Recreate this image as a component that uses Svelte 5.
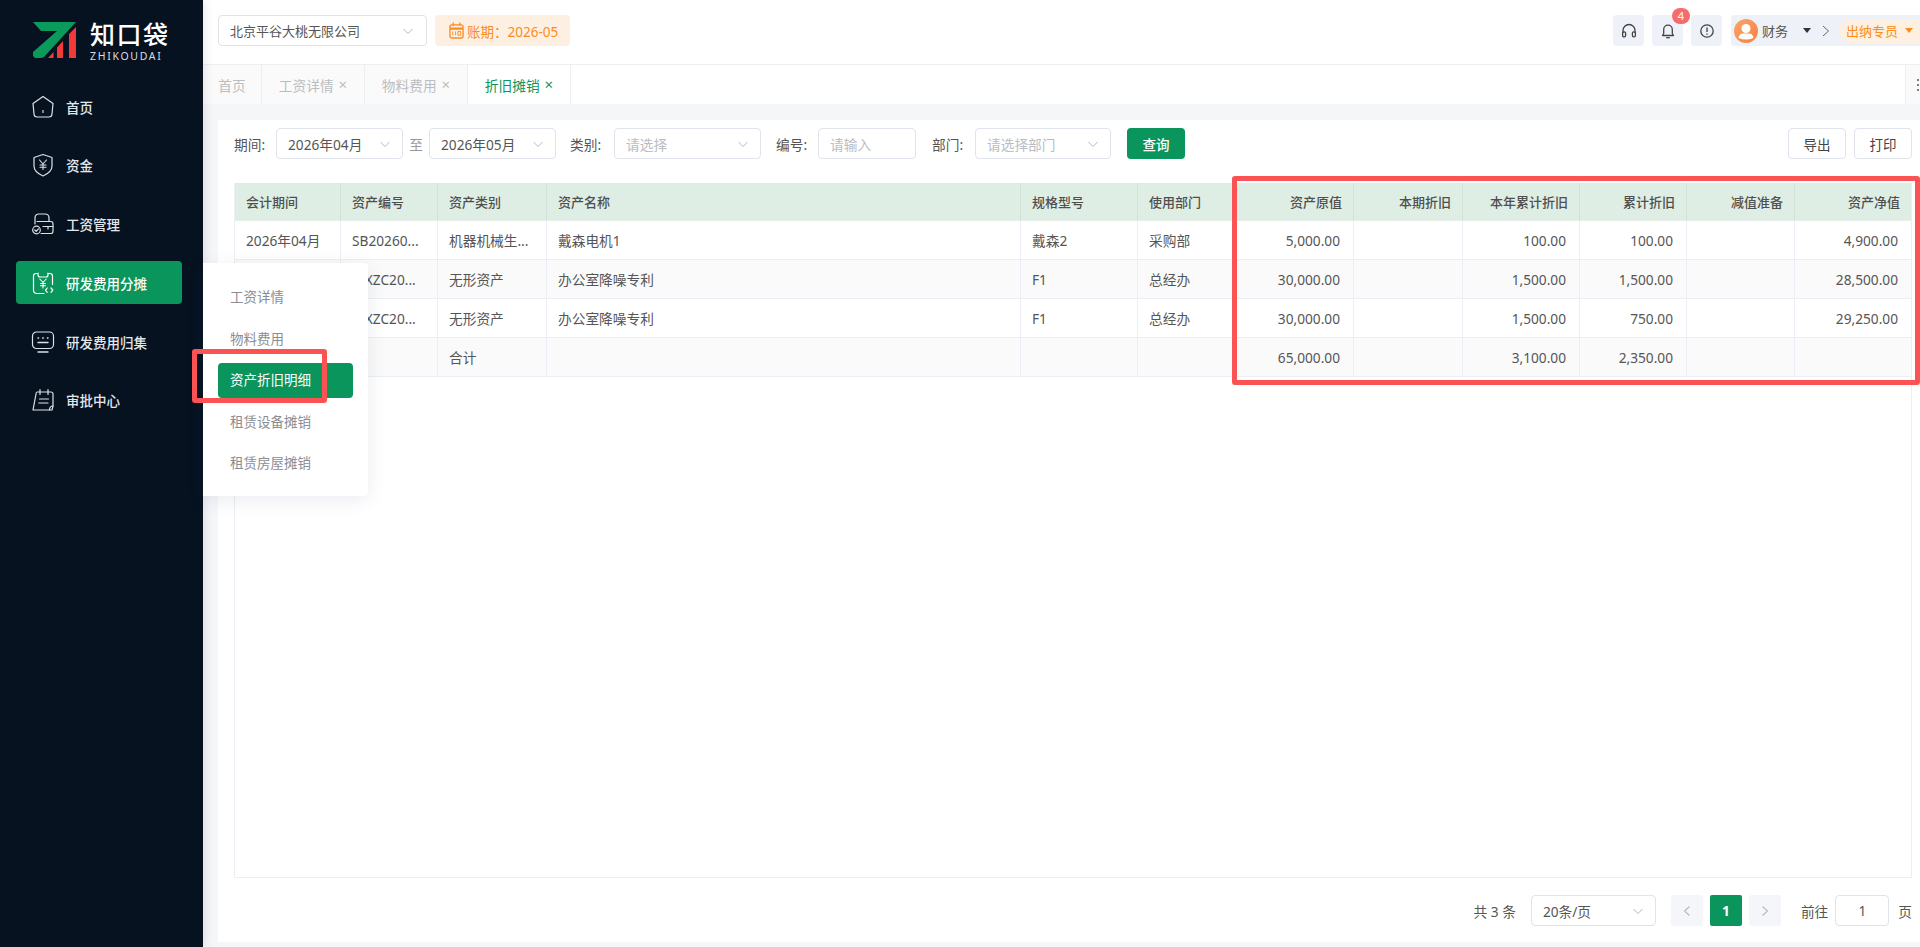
<script>
  // Depreciation detail page: sidebar, top bar, tabs, filter row, table, pagination.
  const nav = [
    { label: '首页', icon: 'home' },
    { label: '资金', icon: 'shield' },
    { label: '工资管理', icon: 'wallet' },
    { label: '研发费用分摊', icon: 'clip', active: true },
    { label: '研发费用归集', icon: 'screen' },
    { label: '审批中心', icon: 'note' }
  ];
  const sub = ['工资详情', '物料费用', '资产折旧明细', '租赁设备摊销', '租赁房屋摊销'];
  const tabs = [
    { label: '首页' },
    { label: '工资详情', close: true },
    { label: '物料费用', close: true },
    { label: '折旧摊销', close: true, active: true }
  ];
  const cols = [
    { t: '会计期间', w: 106 },
    { t: '资产编号', w: 97 },
    { t: '资产类别', w: 109 },
    { t: '资产名称', w: 474 },
    { t: '规格型号', w: 117 },
    { t: '使用部门', w: 99 },
    { t: '资产原值', w: 117, num: true },
    { t: '本期折旧', w: 109, num: true },
    { t: '本年累计折旧', w: 117, num: true },
    { t: '累计折旧', w: 107, num: true },
    { t: '减值准备', w: 108, num: true },
    { t: '资产净值', w: 116, num: true }
  ];
  const rows = [
    ['2026年04月', 'SB20260...', '机器机械生...', '戴森电机1', '戴森2', '采购部', '5,000.00', '', '100.00', '100.00', '', '4,900.00'],
    ['2026年05月', 'WXZC20...', '无形资产', '办公室降噪专利', 'F1', '总经办', '30,000.00', '', '1,500.00', '1,500.00', '', '28,500.00'],
    ['2026年04月', 'WXZC20...', '无形资产', '办公室降噪专利', 'F1', '总经办', '30,000.00', '', '1,500.00', '750.00', '', '29,250.00'],
    ['', '', '合计', '', '', '', '65,000.00', '', '3,100.00', '2,350.00', '', '']
  ];
</script>

{#snippet chevron()}
  <svg class="chev" viewBox="0 0 12 12" width="12" height="12"><path d="M1.5 4 L6 8.5 L10.5 4" fill="none" stroke="#b4b8c0" stroke-width="1"/></svg>
{/snippet}

{#snippet navIcon(name)}
  <svg class="nav-icon" viewBox="0 0 24 24" width="24" height="24" fill="none" stroke="currentColor" stroke-width="1.2" stroke-linejoin="round" stroke-linecap="round">
    {#if name === 'home'}
      <path d="M12 1.5 L22 8.5 L21 19 Q20.8 22 18 22 H6 Q3.2 22 3 19 L2 8.5 Z"/><path d="M12 15.5 V17.5"/>
    {:else if name === 'shield'}
      <path d="M12 1.5 L21 4.5 V13 Q21 19 12 23 Q3 19 3 13 V4.5 Z"/>
      <path d="M8.5 7 L12 11 L15.5 7 M12 11 V16.5 M9 12 H15 M9 14.2 H15" stroke-width="1.1"/>
    {:else if name === 'wallet'}
      <path d="M4 12 V6 Q4 2 8 2 H14 Q18 2 18 6 V9"/>
      <path d="M6 9.5 H20 Q22 9.5 22 12 V19 Q22 21.5 20 21.5 H10"/>
      <path d="M12 14.5 H22 M17 14.5 V17"/>
      <circle cx="5.5" cy="18" r="3.8"/><path d="M3.8 18 L5.2 19.4 L7.4 16.8"/>
    {:else if name === 'clip'}
      <path d="M7 2.5 H5 Q2.5 2.5 2.5 5 V19 Q2.5 22.5 6 22.5 H13"/>
      <path d="M17 2.5 H19 Q21.5 2.5 21.5 5 V13.5"/>
      <path d="M7 2 V4 Q7 6 9 6 H15 Q17 6 17 4 V2"/>
      <path d="M8.8 8 L12 11.5 L15.2 8 M12 11.5 V17 M9.5 12.5 H14.5 M9.5 14.8 H14.5" stroke-width="1.1"/>
      <path d="M16.2 17 L14.5 19.2 L16.2 21.4 M20 17 L21.8 19.2 L20 21.4"/>
    {:else if name === 'screen'}
      <rect x="1.5" y="2" width="21" height="16.5" rx="4"/>
      <path d="M7 8 H7.6 M11.7 8 H12.3 M16.4 8 H17 M7 12.5 H17 M7 22 H17" stroke-width="1.4"/>
    {:else}
      <path d="M6 4 H20 Q22 4 22 6 V18 L21 22 H2 L5 6 Q5.2 4 6 4 Z"/>
      <path d="M9 1.5 V6.5 M17 1.5 V6.5 M8.5 11 H17.5 M7.8 15 H17 M22 18 Q18.5 18 18.5 22"/>
    {/if}
  </svg>
{/snippet}

<div class="app">
  <aside class="sidebar">
    <div class="brand">
      <svg class="mark" viewBox="0 0 44 36" width="44" height="36">
        <path d="M0 0 H43 L11 35 Q9 36 7 36 H2 L0 34 V30 L24 9 H8 Z" fill="#0a9a5c"/>
        <path d="M15 36 L20.5 30 V36 Z M24 36 V25.5 L30 19 V36 Z M36 36 V12 L43 5 V36 Z" fill="#f23a3a"/>
      </svg>
      <div class="brand-text">
        <div class="brand-cn">知口袋</div>
        <div class="brand-en">ZHIKOUDAI</div>
      </div>
    </div>
    <nav class="nav">
      {#each nav as item}
        <div class="nav-item" class:active={item.active}>
          {@render navIcon(item.icon)}
          <span>{item.label}</span>
        </div>
      {/each}
    </nav>
  </aside>

  <div class="main">
    <header class="topbar">
      <div class="company">
        <span>北京平谷大桃无限公司</span>
        {@render chevron()}
      </div>
      <div class="period">
        <svg viewBox="0 0 16 18" width="15" height="17" fill="none" stroke="#fb8c1e" stroke-width="1.4">
          <rect x="1" y="3" width="14" height="14" rx="2"/>
          <path d="M1 7 H15" stroke-width="2.4"/><path d="M4.5 0.5 V4 M11.5 0.5 V4"/>
          <path d="M4 10 V14 M7 10 V14 M9.5 10 H12.5 V14 H9.5 Z" stroke-width="1"/>
        </svg>
        <span>账期：2026-05</span>
      </div>
      <div class="top-right">
        <div class="icon-btn">
          <svg viewBox="0 0 16 16" width="16" height="16" fill="none" stroke="#444" stroke-width="1.3"><path d="M2 10 V7.5 A6 6 0 0 1 14 7.5 V10"/><rect x="1.6" y="8.8" width="3" height="5" rx="1.3"/><rect x="11.4" y="8.8" width="3" height="5" rx="1.3"/></svg>
        </div>
        <div class="icon-btn">
          <svg viewBox="0 0 16 16" width="16" height="16" fill="none" stroke="#444" stroke-width="1.3" stroke-linejoin="round"><path d="M2.5 12.5 H13.5 L12.3 10.5 V6.5 A4.3 4.3 0 0 0 3.7 6.5 V10.5 Z"/><path d="M6.2 14.7 H9.8"/></svg>
          <span class="badge">4</span>
        </div>
        <div class="icon-btn">
          <svg viewBox="0 0 16 16" width="16" height="16" fill="none" stroke="#444" stroke-width="1.3"><circle cx="8" cy="8" r="6.2"/><path d="M8 4.5 V9 M8 10.6 V11.8"/></svg>
        </div>
        <div class="user">
          <div class="avatar">
            <svg viewBox="0 0 24 24" width="24" height="24"><circle cx="12" cy="9.5" r="4.5" fill="#fff"/><path d="M4.5 19 Q5 14.5 9 14.5 H15 Q19 14.5 19.5 19 Q12 22 4.5 19 Z" fill="#fff"/></svg>
          </div>
          <span class="user-name">财务</span>
          <i class="caret"></i>
          <svg class="arrow" viewBox="0 0 8 12" width="8" height="12"><path d="M1 1 L6.5 6 L1 11" fill="none" stroke="#666" stroke-width="1"/></svg>
          <div class="role"><span>出纳专员</span><i class="caret orange"></i></div>
        </div>
      </div>
    </header>

    <div class="tabs">
      {#each tabs as tab}
        <div class="tab" class:active={tab.active}>
          <span>{tab.label}</span>
          {#if tab.close}<span class="x">×</span>{/if}
        </div>
      {/each}
      <div class="tab-menu">
        <svg viewBox="0 0 8 14" width="8" height="14"><path d="M0 2 H2 M4 2 H8 M0 7 H2 M4 7 H8 M0 12 H2 M4 12 H8" stroke="#555" stroke-width="1.4"/></svg>
      </div>
    </div>

    <div class="body">
      <section class="card">
        <div class="filters">
          <label class="lbl w42">期间:</label>
          <div class="field w127 val"><span>2026年04月</span>{@render chevron()}</div>
          <span class="to">至</span>
          <div class="field w127 val"><span>2026年05月</span>{@render chevron()}</div>
          <label class="lbl w44 m14">类别:</label>
          <div class="field w147"><span>请选择</span>{@render chevron()}</div>
          <label class="lbl w42 m15">编号:</label>
          <div class="field w98"><span>请输入</span></div>
          <label class="lbl w43 m16">部门:</label>
          <div class="field w136"><span>请选择部门</span>{@render chevron()}</div>
          <button class="btn-primary">查询</button>
          <div class="spacer"></div>
          <button class="btn">导出</button>
          <button class="btn">打印</button>
        </div>

        <div class="table-wrap">
          <table>
            <colgroup>
              {#each cols as c}<col style="width:{c.w}px" />{/each}
            </colgroup>
            <thead>
              <tr>{#each cols as c}<th class:num={c.num}>{c.t}</th>{/each}</tr>
            </thead>
            <tbody>
              {#each rows as row, r}
                <tr class:stripe={r % 2 === 1}>
                  {#each row as v, i}<td class:num={cols[i].num}>{v}</td>{/each}
                </tr>
              {/each}
            </tbody>
          </table>
        </div>

        <div class="pager">
          <span>共 3 条</span>
          <div class="field page-size val"><span>20条/页</span>{@render chevron()}</div>
          <div class="pg-btn">
            <svg viewBox="0 0 8 12" width="8" height="12"><path d="M6.5 1.5 L1.5 6 L6.5 10.5" fill="none" stroke="#b4b8c0" stroke-width="1.1"/></svg>
          </div>
          <div class="pg-btn cur">1</div>
          <div class="pg-btn">
            <svg viewBox="0 0 8 12" width="8" height="12"><path d="M1.5 1.5 L6.5 6 L1.5 10.5" fill="none" stroke="#b4b8c0" stroke-width="1.1"/></svg>
          </div>
          <span class="goto">前往</span>
          <div class="field page-input val"><span>1</span></div>
          <span>页</span>
        </div>
      </section>
    </div>
  </div>

  <div class="popup">
    {#each sub as s, i}
      <div class="pop-item" class:on={i === 2}>{s}</div>
    {/each}
  </div>

  <div class="mark-box menu-box"></div>
  <div class="mark-box table-box"></div>
</div>

<style>
  :global(body) { margin: 0; background: #f5f6f8; }
  .app {
    position: relative;
    display: flex;
    height: 947px;
    overflow: hidden;
    font-family: "Noto Sans", "Noto Sans CJK SC", sans-serif;
    font-size: 13.7px;
    color: #606266;
  }

  /* sidebar */
  .sidebar {
    width: 203px;
    flex: none;
    background: #061220;
    color: #e4e7ec;
    box-shadow: 3px 0 8px rgba(0, 0, 0, 0.08);
    z-index: 1;
  }
  .brand { display: flex; gap: 13px; padding: 22px 0 0 33px; height: 57px; }
  .mark { flex: none; }
  .brand-cn { font-size: 25px; line-height: 22px; color: #fff; letter-spacing: 1.5px; font-weight: 500; margin-top: 1px; }
  .brand-en { font-size: 10.5px; line-height: 10px; margin-top: 6px; letter-spacing: 1.7px; color: #d8dce2; }
  .nav { display: flex; flex-direction: column; gap: 15.8px; padding: 6px 21px 0 16px; }
  .nav-item {
    display: flex;
    align-items: center;
    height: 43px;
    padding-left: 15px;
    border-radius: 4px;
    font-size: 13.5px;
    font-weight: 500;
  }
  .nav-item.active { background: #0a955c; color: #fff; }
  .nav-icon { flex: none; margin-right: 11px; color: #dde1e7; }
  .nav-item.active .nav-icon { color: #fff; }

  /* top bar */
  .main { flex: 1; min-width: 0; display: flex; flex-direction: column; }
  .topbar {
    height: 65px;
    box-sizing: border-box;
    flex: none;
    display: flex;
    align-items: center;
    padding: 0 0 3px 15px;
    background: #fff;
    border-bottom: 1px solid #eeeff2;
  }
  .company {
    width: 209px;
    height: 31px;
    box-sizing: border-box;
    display: flex;
    align-items: center;
    justify-content: space-between;
    padding: 0 12px 0 11px;
    border: 1px solid #dfe2e8;
    border-radius: 4px;
    color: #555;
    font-size: 13px;
  }
  .period {
    margin-left: 8px;
    width: 135px;
    height: 31px;
    box-sizing: border-box;
    display: flex;
    align-items: center;
    gap: 3px;
    padding-left: 14px;
    background: #fdf0e2;
    border-radius: 4px;
    color: #fb8c1e;
    font-size: 13.5px;
    white-space: nowrap;
  }
  .top-right { margin-left: auto; display: flex; align-items: center; gap: 8px; }
  .icon-btn {
    position: relative;
    width: 31px;
    height: 31px;
    display: flex;
    align-items: center;
    justify-content: center;
    background: #eef1f8;
    border-radius: 4px;
  }
  .badge {
    position: absolute;
    top: -7px;
    right: -7px;
    width: 18px;
    height: 16px;
    border-radius: 8px;
    background: #f56c6c;
    color: #fff;
    font-size: 11px;
    line-height: 16px;
    text-align: center;
  }
  .user {
    width: 189px;
    height: 31px;
    margin-left: 1px;
    display: flex;
    align-items: center;
    background: #eef1f8;
    border-radius: 4px 0 0 4px;
  }
  .avatar {
    margin-left: 3px;
    width: 24px;
    height: 24px;
    border-radius: 50%;
    background: linear-gradient(135deg, #fda56a, #f5803e);
    overflow: hidden;
  }
  .user-name { margin-left: 4px; color: #555; font-size: 13px; }
  .caret {
    display: inline-block;
    width: 0;
    height: 0;
    margin-left: 15px;
    border-left: 4px solid transparent;
    border-right: 4px solid transparent;
    border-top: 5px solid #333;
  }
  .caret.orange { border-top-color: #fb8c1e; margin-left: 7px; }
  .arrow { margin-left: 11px; }
  .role {
    margin-left: 9px;
    flex: 1;
    height: 24px;
    display: flex;
    align-items: center;
    padding-left: 7px;
    background: #fdf0e0;
    border-radius: 12px 0 0 12px;
    color: #fb8c1e;
    font-size: 13px;
  }

  /* tabs */
  .tabs { height: 39px; flex: none; display: flex; background: #fff; }
  .tab {
    width: 103px;
    height: 39px;
    box-sizing: border-box;
    display: flex;
    align-items: center;
    justify-content: center;
    gap: 5px;
    background: #fafafa;
    border-right: 1px solid #eeeff2;
    color: #bbbdc2;
  }
  .tab:first-child { width: 59px; }
  .tab.active { background: #fff; color: #0a955c; }
  .x { font-size: 15px; line-height: 1; }
  .tab-menu {
    margin-left: auto;
    width: 15px;
    box-sizing: border-box;
    padding-left: 11px;
    display: flex;
    align-items: center;
    overflow: hidden;
    background: #fafafa;
    border-left: 1px solid #eeeff2;
  }
  .tab-menu svg { flex: none; }

  /* card */
  .body { flex: 1; min-height: 0; padding: 16px 0 5px 15px; display: flex; }
  .card {
    flex: 1;
    min-width: 0;
    box-sizing: border-box;
    display: flex;
    flex-direction: column;
    background: #fff;
    padding: 8px 8px 0 16px;
  }
  .filters { display: flex; align-items: center; height: 31px; flex: none; }
  .lbl { color: #555; flex: none; }
  .w42 { width: 42px; }
  .w43 { width: 43px; }
  .w44 { width: 44px; }
  .m14 { margin-left: 14px; }
  .m15 { margin-left: 15px; }
  .m16 { margin-left: 16px; }
  .to { width: 26px; text-align: center; color: #999; }
  .field {
    height: 31px;
    box-sizing: border-box;
    display: flex;
    align-items: center;
    justify-content: space-between;
    padding: 0 11px;
    border: 1px solid #e1e3ec;
    border-radius: 4px;
    color: #b9bcc3;
  }
  .val { color: #555; }
  .w127 { width: 127px; }
  .w147 { width: 147px; }
  .w98 { width: 98px; }
  .w136 { width: 136px; }
  .btn-primary, .btn {
    height: 31px;
    width: 58px;
    padding: 0;
    border-radius: 4px;
    font-family: inherit;
    font-size: 13.5px;
  }
  .btn-primary { margin-left: 16px; background: #0a955c; border: none; color: #fff; font-weight: 500; }
  .btn { margin-left: 8px; background: #fff; border: 1px solid #e1e3ec; color: #444; }
  .spacer { flex: 1; }

  /* table */
  .table-wrap {
    margin-top: 24px;
    height: 695px;
    flex: none;
    box-sizing: border-box;
    border-right: 1px solid #ebeef5;
    border-bottom: 1px solid #ebeef5;
    border-left: 1px solid #ebeef5;
  }
  table { width: 100%; table-layout: fixed; border-collapse: separate; border-spacing: 0; }
  th, td {
    box-sizing: border-box;
    padding: 0 11px;
    border-right: 1px solid #ebeef5;
    border-bottom: 1px solid #ebeef5;
    white-space: nowrap;
    text-align: left;
  }
  th {
    height: 38px;
    background: #dfeee4;
    border-right-color: #d2e2d8;
    border-bottom-color: #e6efe9;
    color: #4f4f4f;
    font-size: 13px;
    font-weight: 500;
  }
  td { height: 39px; color: #555; font-size: 13.7px; }
  td.num { padding-right: 13px; }
  .stripe td { background: #fafafa; }
  .num { text-align: right; }
  th:last-child, td:last-child { border-right: none; }

  /* pagination */
  .pager {
    height: 31px;
    margin-top: 17px;
    flex: none;
    display: flex;
    align-items: center;
    justify-content: flex-end;
    color: #555;
  }
  .page-size { width: 125px; margin: 0 15px; }
  .pg-btn {
    width: 32px;
    height: 31px;
    margin-right: 7px;
    display: flex;
    align-items: center;
    justify-content: center;
    background: #f5f6f9;
    border-radius: 2px;
  }
  .pg-btn.cur { background: #0a955c; color: #fff; font-weight: 700; }
  .goto { margin-left: 6px; margin-right: 0; padding-left: 7px; }
  .page-input { width: 54px; margin: 0 9px 0 7px; justify-content: center; }

  /* submenu popup */
  .popup {
    position: absolute;
    left: 203px;
    top: 263px;
    width: 165px;
    height: 233px;
    box-sizing: border-box;
    padding: 17px 15px 0;
    background: #fff;
    border-radius: 0 4px 4px 0;
    box-shadow: 0 4px 18px rgba(60, 70, 120, 0.1);
    z-index: 2;
  }
  .pop-item {
    height: 35px;
    margin-bottom: 6.5px;
    padding-left: 12px;
    line-height: 35px;
    font-size: 13.5px;
    color: #8a8d93;
    border-radius: 4px;
  }
  .pop-item.on { background: #0a955c; color: #fff; }

  /* red annotation boxes */
  .mark-box {
    position: absolute;
    box-sizing: border-box;
    border: 5px solid #fb5353;
    border-radius: 3px;
    z-index: 3;
  }
  .menu-box { left: 192px; top: 349px; width: 135px; height: 54px; }
  .table-box { left: 1232px; top: 176px; width: 688px; height: 209px; }
</style>
